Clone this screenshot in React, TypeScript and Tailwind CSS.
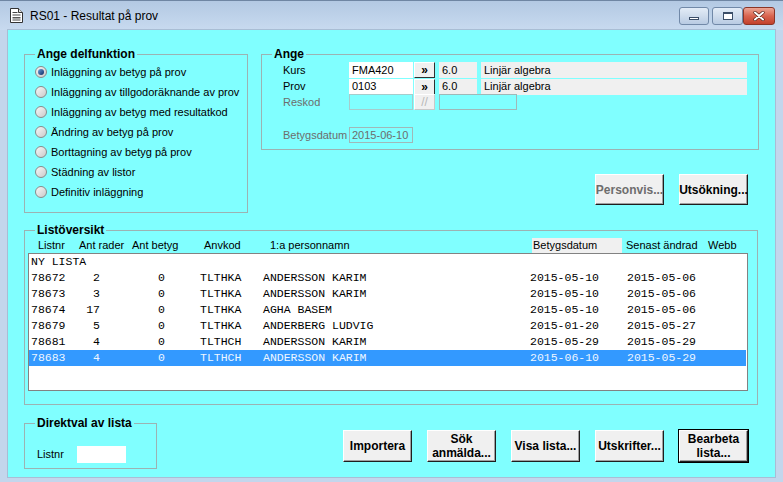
import clsx from 'clsx';

const ui = "font-['Liberation_Sans',Arial,sans-serif]";
const mono = "font-['Liberation_Mono','Courier_New',monospace]";

const functions = [
  'Inläggning av betyg på prov',
  'Inläggning av tillgodoräknande av prov',
  'Inläggning av betyg med resultatkod',
  'Ändring av betyg på prov',
  'Borttagning av betyg på prov',
  'Städning av listor',
  'Definitiv inläggning',
];

const lists = [
  { nr: '78672', rader: '2', betyg: '0', anv: 'TLTHKA', namn: 'ANDERSSON KARIM', bet: '2015-05-10', andr: '2015-05-06' },
  { nr: '78673', rader: '3', betyg: '0', anv: 'TLTHKA', namn: 'ANDERSSON KARIM', bet: '2015-05-10', andr: '2015-05-06' },
  { nr: '78674', rader: '17', betyg: '0', anv: 'TLTHKA', namn: 'AGHA BASEM', bet: '2015-05-10', andr: '2015-05-06' },
  { nr: '78679', rader: '5', betyg: '0', anv: 'TLTHKA', namn: 'ANDERBERG LUDVIG', bet: '2015-01-20', andr: '2015-05-27' },
  { nr: '78681', rader: '4', betyg: '0', anv: 'TLTHCH', namn: 'ANDERSSON KARIM', bet: '2015-05-29', andr: '2015-05-29' },
  { nr: '78683', rader: '4', betyg: '0', anv: 'TLTHCH', namn: 'ANDERSSON KARIM', bet: '2015-06-10', andr: '2015-05-29', selected: true },
];

function GroupBox({ title, className, children }: { title: string; className?: string; children?: React.ReactNode }) {
  return (
    <div className={clsx('relative border border-[#9cb2b2]', className)}>
      <span className="absolute -top-[8px] left-[10px] px-[2px] bg-[#80ffff] text-[12px] leading-[14px] font-bold text-black">
        {title}
      </span>
      {children}
    </div>
  );
}

function Radio({ checked, label }: { checked?: boolean; label: string }) {
  return (
    <div className="flex items-center h-[20px]">
      <span className="flex items-center justify-center w-[12px] h-[12px] rounded-full border border-[#8a8a8a] bg-gradient-to-br from-[#f8f8f8] to-[#c9c9c9]">
        {checked && <span className="w-[6px] h-[6px] rounded-full bg-gradient-to-br from-[#6fa3e0] to-[#0b2b60]" />}
      </span>
      <span className="ml-[4px] text-[11px] leading-[13px]">{label}</span>
    </div>
  );
}

function Btn({ children, disabled, isDefault, className }: { children: React.ReactNode; disabled?: boolean; isDefault?: boolean; className?: string }) {
  return (
    <div
      className={clsx(
        'flex items-center justify-center text-center font-bold text-[12px] leading-[14px] bg-[#f0f0f0] border border-t-white border-l-white border-r-[#1e1e1e] border-b-[#1e1e1e] shadow-[inset_-1px_-1px_0_#a0a0a0]',
        disabled ? 'text-[#6d6d6d]' : 'text-black',
        isDefault && 'outline outline-1 outline-black',
        className
      )}
    >
      {children}
    </div>
  );
}

function PickBtn({ disabled }: { disabled?: boolean }) {
  return (
    <div
      className={clsx(
        'ml-[1px] w-[21px] h-[16px] flex items-center justify-center bg-[#f0f0f0] border border-t-white border-l-white text-[12px] leading-none font-bold',
        disabled ? 'border-r-[#c8c8c8] border-b-[#c8c8c8] text-[#b8b8b8] font-normal text-[9px]' : 'border-r-[#303030] border-b-[#303030] text-black'
      )}
    >
      {disabled ? '//' : '»'}
    </div>
  );
}

function TitleIcon() {
  return (
    <svg width="13" height="15" viewBox="0 0 13 15">
      <path d="M0.5 0.5h8l4 4v10h-12z" fill="#fff" stroke="#333" />
      <path d="M8.5 0.5v4h4" fill="#ddd" stroke="#333" />
      <rect x="2.5" y="4" width="5" height="1" fill="#444" />
      <rect x="2.5" y="6.5" width="8" height="1" fill="#444" />
      <rect x="2.5" y="9" width="8" height="1.5" fill="#555" />
      <rect x="2.5" y="11.5" width="8" height="1" fill="#444" />
    </svg>
  );
}

function WinControls() {
  return (
    <div className="flex items-center pr-[8px] pt-[1px]">
      <div className="w-[30px] h-[18px] rounded-[3px] border border-[#7189a8] bg-gradient-to-b from-[#e3ecf7] via-[#cfdcec] to-[#b8cbe3] flex items-end justify-center pb-[4px]">
        <div className="w-[10px] h-[3px] bg-white border border-[#3b4e68]" />
      </div>
      <div className="ml-[3px] w-[31px] h-[18px] rounded-[3px] border border-[#7189a8] bg-gradient-to-b from-[#e3ecf7] via-[#cfdcec] to-[#b8cbe3] flex items-center justify-center">
        <div className="w-[10px] h-[8px] border border-[#3b4e68] border-t-2 bg-white shadow-[inset_0_0_0_1px_#fff]" />
      </div>
      <div className="w-[32px] h-[18px] rounded-[3px] border border-[#8a3527] bg-gradient-to-b from-[#eba595] via-[#d9644f] to-[#c2402b] flex items-center justify-center">
        <svg width="12" height="10" viewBox="0 0 12 10">
          <path d="M2 1.5l8 7M10 1.5l-8 7" stroke="#4a1a12" strokeWidth="3.2" strokeLinecap="round" />
          <path d="M2 1.5l8 7M10 1.5l-8 7" stroke="#fff" strokeWidth="2" strokeLinecap="round" />
        </svg>
      </div>
    </div>
  );
}

export default function App() {
  return (
    <div className={clsx('w-[783px] h-[482px] flex flex-col bg-[#c3d6ec] border-t border-[#6f86a3] text-black overflow-hidden', ui)}>
      {/* titelrad */}
      <div className="h-[29px] flex items-center justify-between bg-gradient-to-b from-[#b3c9e3] to-[#c8daef]">
        <div className="flex items-center pl-[10px]">
          <TitleIcon />
          <span className="ml-[7px] text-[12px] text-black">RS01 - Resultat på prov</span>
        </div>
        <WinControls />
      </div>

      {/* klientyta */}
      <div className="px-[8px]">
        <div className="w-[767px] h-[447px] bg-[#80ffff] shadow-[0_0_0_1px_#a9bdd4] pl-[16px] pt-[24px]">
          <div className="flex items-start">
            <GroupBox title="Ange delfunktion" className="w-[224px] h-[159px] pt-[7px] pl-[10px]">
              {functions.map((f, i) => (
                <Radio key={f} label={f} checked={i === 0} />
              ))}
            </GroupBox>

            <div className="ml-[13px] w-[498px]">
              <GroupBox title="Ange" className="h-[96px] pt-[7px] pl-[21px] text-[11px]">
                <div className="flex items-center h-[16px]">
                  <span className="w-[66px]">Kurs</span>
                  <div className="w-[64px] h-[16px] bg-white pl-[3px] flex items-center">FMA420</div>
                  <PickBtn />
                  <div className="ml-[4px] w-[38px] h-[16px] bg-[#f0f0f0] pl-[3px] flex items-center">6.0</div>
                  <div className="ml-[4px] w-[266px] h-[16px] bg-[#f0f0f0] pl-[3px] flex items-center">Linjär algebra</div>
                </div>
                <div className="flex items-center h-[16px] border-t border-transparent">
                  <span className="w-[66px]">Prov</span>
                  <div className="w-[64px] h-[16px] bg-white pl-[3px] flex items-center">0103</div>
                  <PickBtn />
                  <div className="ml-[4px] w-[38px] h-[16px] bg-[#f0f0f0] pl-[3px] flex items-center">6.0</div>
                  <div className="ml-[4px] w-[266px] h-[16px] bg-[#f0f0f0] pl-[3px] flex items-center">Linjär algebra</div>
                </div>
                <div className="flex items-center h-[16px]">
                  <span className="w-[66px] text-[#6d6d6d]">Reskod</span>
                  <div className="w-[64px] h-[16px] border border-[#a6cccc]" />
                  <PickBtn disabled />
                  <div className="ml-[4px] w-[78px] h-[16px] border border-[#a0b8b8]" />
                </div>
                <div className="flex items-center h-[16px] mt-[17px]">
                  <span className="w-[66px] text-[#6d6d6d]">Betygsdatum</span>
                  <div className="w-[64px] h-[16px] border border-[#a0b8b8] pl-[2px] flex items-center text-[#6d6d6d]">2015-06-10</div>
                </div>
              </GroupBox>
              <div className="mt-[24px] flex justify-end gap-[15px] pr-[11px]">
                <Btn disabled className="w-[69px] h-[31px]">Personvis...</Btn>
                <Btn className="w-[69px] h-[31px]">Utsökning...</Btn>
              </div>
            </div>
          </div>

          <GroupBox title="Listöversikt" className="mt-[17px] w-[734px] h-[175px] pt-[7px] pl-[3px]">
            <div className="flex h-[15px] items-center text-[11px]">
              <span className="pl-[10px] w-[51px]">Listnr</span>
              <span className="w-[53px]">Ant rader</span>
              <span className="w-[72px]">Ant betyg</span>
              <span className="w-[66px]">Anvkod</span>
              <span className="w-[262px]">1:a personnamn</span>
              <span className="w-[90px] h-[15px] bg-[#f0f0f0] pl-[1px] flex items-center">Betygsdatum</span>
              <span className="ml-[4px] w-[82px]">Senast ändrad</span>
              <span>Webb</span>
            </div>
            <div className={clsx('w-[720px] h-[138px] bg-white border border-[#828282] text-[11.5px]', mono)}>
              <div className="h-[16px] flex items-center pl-[2px]">NY LISTA</div>
              {lists.map((r) => (
                <div
                  key={r.nr}
                  className={clsx('h-[16px] flex items-center pl-[2px] mr-[1px]', r.selected ? 'bg-[#3399ff] text-[#eef6ff]' : 'text-black')}
                >
                  <span className="w-[40px]">{r.nr}</span>
                  <span className="w-[29px] text-right">{r.rader}</span>
                  <span className="w-[65px] text-right">{r.betyg}</span>
                  <span className="ml-[35px] w-[63px]">{r.anv}</span>
                  <span className="w-[267px]">{r.namn}</span>
                  <span className="w-[97px]">{r.bet}</span>
                  <span>{r.andr}</span>
                </div>
              ))}
            </div>
          </GroupBox>

          <div className="mt-[18px] flex items-start">
            <GroupBox title="Direktval av lista" className="w-[133px] h-[46px] pt-[22px] pl-[12px]">
              <div className="flex items-center h-[17px] text-[11px]">
                <span className="w-[40px]">Listnr</span>
                <div className="w-[49px] h-[17px] bg-white" />
              </div>
            </GroupBox>
            <div className="ml-[186px] mt-[7px] flex gap-[15px]">
              <Btn className="w-[69px] h-[32px]">Importera</Btn>
              <Btn className="w-[69px] h-[32px]">
                Sök
                <br />
                anmälda...
              </Btn>
              <Btn className="w-[69px] h-[32px]">Visa lista...</Btn>
              <Btn className="w-[69px] h-[32px]">Utskrifter...</Btn>
              <Btn isDefault className="w-[69px] h-[32px]">
                Bearbeta
                <br />
                lista...
              </Btn>
            </div>
          </div>
        </div>
      </div>
    </div>
  );
}
